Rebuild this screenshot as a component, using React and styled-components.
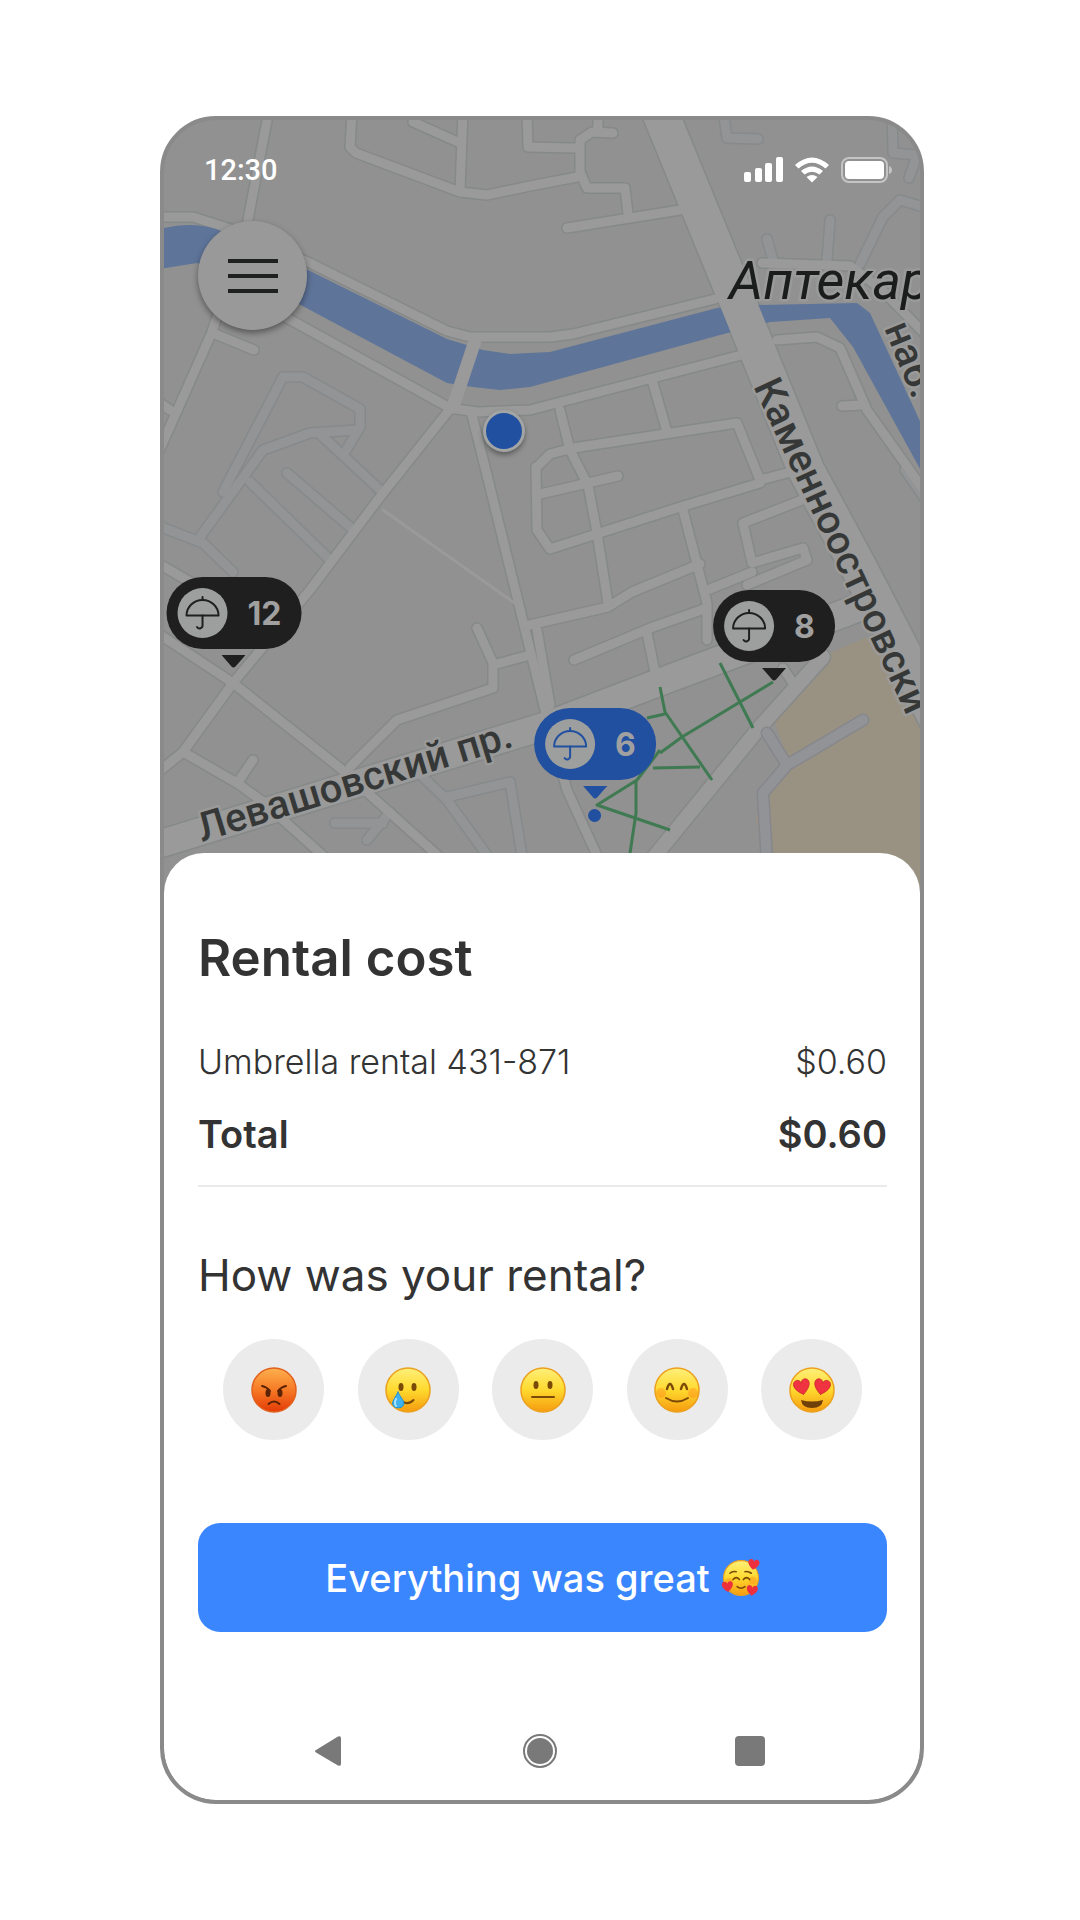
import React, { useState } from 'react'
import styled, { createGlobalStyle } from 'styled-components';

const minorRoads = [
  'M269 110 L247 225 L212 332 L156 458',
  'M215 334 L254 350',
  'M352 114 L350 147 L356 153 L460 192 L487 195 L530 186 L582 176',
  'M413 122 L460 143',
  'M463 110 L460 192',
  'M527 110 L528 147 L574 148',
  'M613 133 L592 132 L580 140 L580 172 L587 188 L625 188 L628 214',
  'M598 110 L598 131',
  'M567 228 L680 210',
  'M156 217 L193 217 L240 232 L310 263 L447 331 L470 337 L550 337 L573 334 L715 299',
  'M280 314 L450 408 L477 412 L530 410 L745 354',
  'M450 409 L380 497 L310 590 L233 683 L183 752 L156 774',
  'M472 415 L487 475 L517 597 L545 710 L567 790 L600 862',
  'M156 632 L233 683 L340 768 L445 862',
  'M156 562 L190 582 L230 610',
  'M183 752 L237 783 L262 801 L330 862',
  'M238 782 L253 760',
  'M350 767 L397 720 L493 688 L493 663 L477 628',
  'M493 665 L530 655',
  'M525 626 L608 607 L632 592 L700 564',
  'M156 400 L170 410',
  'M777 340 L817 337 L840 348 L867 410 L923 489',
  'M863 405 L842 406',
  'M762 263 L850 266 L880 288 L925 334',
  'M537 467 L550 454 L573 448 L737 423 L760 480 L787 473',
  'M560 410 L570 450 L588 485 L597 533 L608 603',
  'M653 383 L667 432',
  'M536 467 L537 530 L550 549 L677 508 L760 483',
  'M536 495 L618 476',
  'M683 510 L707 603 L707 640',
  'M802 500 L743 523 L752 563 L803 548',
  'M710 589 L752 572',
  'M747 585 L807 560 L803 548',
  'M574 660 L653 627 L704 609',
  'M647 633 L655 672',
  'M537 630 L550 705',
  'M783 668 L793 683',
];

const paleRoads = [
  'M223 492 L283 377 L303 377 L360 409 L360 427 L345 452',
  'M358 430 L310 433 L263 450 L200 537',
  'M320 434 L380 490',
  'M250 482 L327 557',
  'M287 473 L350 527',
  'M156 525 L203 543 L233 572',
  'M423 777 L447 800 L492 862',
  'M447 797 L510 782 L523 862',
  'M335 823 L383 823',
  'M390 812 L367 840',
  'M860 264 L883 217 L900 200 L920 206',
  'M827 260 L830 220',
  'M773 260 L767 239',
  'M723 110 L727 138 L758 139',
  'M892 110 L893 153 L917 155',
  'M917 155 L909 178',
  'M905 470 L926 500',
];

const footpaths = 'M720 663 L753 728 M773 682 L682 737 L660 753 M660 750 L637 780 L597 805 L670 830 M660 687 L665 712 L712 780 M665 714 L647 718 M653 768 L700 767 M636 780 L636 813 L629 860';

const CityMap = () => (
  <MapArt viewBox="164 120 756 773" preserveAspectRatio="xMidYMin slice" aria-hidden="true">
    <rect x="160" y="116" width="764" height="781" fill="#909190" />
    <path
      d="M867 637 L830 653 L800 695 L773 718 L787 757 L765 795 L756 818 L772 900 L924 900 L924 735 L880 650 Z"
      fill="#999283"
    />

    <g fill="none" strokeLinejoin="round" strokeLinecap="round">
      <g stroke="#868a8b" strokeWidth="12">
        {paleRoads.map((d) => <path key={d} d={d} />)}
      </g>
      <g stroke="#868989" strokeWidth="12">
        {minorRoads.map((d) => <path key={d} d={d} />)}
        <path d="M140 850 L545 726 L660 682 L850 611 L870 603" strokeWidth="30" />
        <path d="M823 657 L760 727 L650 862" strokeWidth="17" />
        <path d="M655 100 L737 300 L806 470 L860 570 L940 725" strokeWidth="39" />
      </g>
      <g stroke="#929496" strokeWidth="9">
        {paleRoads.map((d) => <path key={d} d={d} />)}
      </g>
      <g stroke="#999a99" strokeWidth="9">
        {minorRoads.map((d) => <path key={d} d={d} />)}
        <path d="M383 510 L520 607" strokeWidth="3" />
        <path d="M823 657 L760 727 L650 862" strokeWidth="14" />
        <path d="M140 850 L545 726 L660 682 L850 611 L870 603" strokeWidth="27" />
      </g>
    </g>

    <path
      d="M160 229 Q190 221 216 229 L310 271 L447 339 L467 345 L483 350 L510 354 L550 352 L717 308 L757 305 L857 303 L870 313 L924 430 L924 476 L853 347 L830 318 L770 322 L720 335 L530 387 L500 390 L473 387 L447 383 L297 303 L197 263 L160 269 Z"
      fill="#5e7499"
    />

    <g fill="none" strokeLinejoin="round" strokeLinecap="round">
      <path d="M475 341 L453 407" stroke="#999a99" strokeWidth="13" />
      <path d="M655 100 L737 300 L806 470 L860 570 L940 725" stroke="#999a99" strokeWidth="36" />
      <path d="M863 720 L787 765 L763 793 L767 862 M767 733 L787 765" stroke="#86878c" strokeWidth="13" />
      <path d="M863 720 L787 765 L763 793 L767 862 M767 733 L787 765" stroke="#929397" strokeWidth="10" />
      <path d={footpaths} stroke="#3f7a52" strokeWidth="3" strokeLinecap="butt" />
    </g>

    <StreetName x="729" y="299" $size={54} $italic>Аптекар</StreetName>
    <StreetName transform="translate(884 328) rotate(68)" $size={40}>наб.</StreetName>
    <StreetName transform="translate(753 386) rotate(65)" $size={40}>Каменноостровски</StreetName>
    <StreetName transform="translate(202 842) rotate(-17)" $size={40}>Левашовский пр.</StreetName>
  </MapArt>
);

const Umbrella = () => (
  <svg width="36" height="36" viewBox="0 0 36 36" fill="none" stroke="currentColor" strokeWidth="2" strokeLinecap="round">
    <path d="M2 20.500 A16 15.500 0 0 1 34 20.500 Z" strokeLinejoin="round" />
    <path d="M18 2 V5 M18 20.500 V30 A3 3 0 0 1 12.500 32" />
  </svg>
);

const Pin = ({ x, y, count, active }) => (
  <PinWrap $x={x} $y={y} $active={active}>
    <PinPill aria-label={`${count} umbrellas`}>
      <PinIcon><Umbrella /></PinIcon>
      {count}
    </PinPill>
    <svg width="24" height="13" viewBox="0 0 24 13" fill="currentColor">
      <path d="M0 0 H24 L14 11.500 Q12 13.500 10 11.500 Z" />
    </svg>
    {active && <PinTarget />}
  </PinWrap>
);

const StatusIcons = () => (
  <svg width="148" height="26" viewBox="0 0 148 26" fill="#fff" aria-hidden="true">
    <rect x="0" y="15" width="7" height="10" rx="2" />
    <rect x="11" y="11" width="7" height="14" rx="2" />
    <rect x="21" y="6" width="7" height="19" rx="2" />
    <rect x="32" y="0" width="7" height="25" rx="2" />
    <path d="M51 8 Q68 -7 85 8 L81.500 11.500 Q68 0 54.500 11.500 Z" />
    <path d="M57 14 Q68 5 79 14 L75.500 17.500 Q68 12 60.500 17.500 Z" />
    <path d="M62.500 20 Q68 16 73.500 20 L68 25.500 Z" />
    <rect x="98" y="1" width="45" height="24" rx="7" fill="none" stroke="#c4c4c4" strokeWidth="2" />
    <rect x="101" y="4" width="39" height="18" rx="4" />
    <path d="M145 9 Q148 10 148 13 Q148 16 145 17 Z" fill="#c4c4c4" />
  </svg>
);

const heart = 'M0 6 C-9 0 -7 -6 -3 -6 C-1 -6 0 -4 0 -3 C0 -4 1 -6 3 -6 C7 -6 9 0 0 6 Z';

const faces = {
  angry: (
    <>
      <path d="M12 20 Q17 21 20 25 M36 20 Q31 21 28 25" />
      <ellipse cx="18" cy="27" rx="2.500" ry="4" fill="#5b2405" stroke="none" />
      <ellipse cx="30" cy="27" rx="2.500" ry="4" fill="#5b2405" stroke="none" />
      <path d="M18.500 38 Q24 33 29.500 38" />
    </>
  ),
  tear: (
    <>
      <ellipse cx="17" cy="21" rx="2.500" ry="4" fill="#7a4a06" stroke="none" />
      <ellipse cx="30" cy="21" rx="2.500" ry="4" fill="#7a4a06" stroke="none" />
      <path d="M19 36 Q25 39 29.500 34" />
      <path d="M14 26 C16 31 20 34 20 38 A6 5.500 0 0 1 8.500 38 C8.500 34 12 31 14 26 Z" fill="#3eb1ee" stroke="#1c93d6" strokeWidth="1" />
      <path d="M12 33 Q10 37 12 40" stroke="#a8e4ff" />
    </>
  ),
  neutral: (
    <>
      <ellipse cx="17" cy="19" rx="2.500" ry="4" fill="#7a4a06" stroke="none" />
      <ellipse cx="31" cy="19" rx="2.500" ry="4" fill="#7a4a06" stroke="none" />
      <path d="M13 31 H35" />
    </>
  ),
  happy: (
    <>
      <ellipse cx="8" cy="27" rx="5" ry="5" fill="#ff7a1a" opacity="0.350" stroke="none" />
      <ellipse cx="40" cy="27" rx="5" ry="5" fill="#ff7a1a" opacity="0.350" stroke="none" />
      <path d="M14 23 Q17 13 20 23 M28 23 Q31 13 34 23" strokeWidth="2.500" />
      <path d="M13 32 Q24 39 35 32" />
    </>
  ),
  love: (
    <>
      <path d="M13 34 Q24 37 35 34 Q34 42 24 42 Q14 42 13 34 Z" fill="#70400a" stroke="none" />
      <path d={heart} transform="translate(14 21) rotate(-12) scale(1.250)" fill="#ef3340" stroke="#c41f2c" strokeWidth="0.500" />
      <path d={heart} transform="translate(34 21) rotate(12) scale(1.250)" fill="#ef3340" stroke="#c41f2c" strokeWidth="0.500" />
    </>
  ),
  adore: (
    <>
      <ellipse cx="9" cy="29" rx="5" ry="5" fill="#ff7a1a" opacity="0.350" stroke="none" />
      <ellipse cx="39" cy="27" rx="5" ry="5" fill="#ff7a1a" opacity="0.350" stroke="none" />
      <path d="M10 18 Q13 15 18 16 M29 16 Q33 15 37 18 M14 26 Q18 21 22 26 M27 26 Q31 21 35 26 M19 35 Q24 39 29 35" />
      <path d={heart} transform="translate(40 7) rotate(8) scale(1.100)" fill="#ee2f3c" stroke="none" />
      <path d={heart} transform="translate(7 35) rotate(-6) scale(1.100)" fill="#ee2f3c" stroke="none" />
      <path d={heart} transform="translate(38 40) rotate(8) scale(1.100)" fill="#ee2f3c" stroke="none" />
    </>
  ),
};

const Emoji = ({ name, size }) => {
  const angry = name === 'angry';
  return (
    <EmojiSvg width={size} height={size} viewBox="0 0 48 48" aria-hidden="true">
      <defs>
        <linearGradient id={`skin-${name}`} x1="0" y1="0" x2="0" y2="1">
          <stop offset="0" stopColor={angry ? '#fdb04e' : '#fff07a'} />
          <stop offset="0.500" stopColor={angry ? '#f67a26' : '#ffd92e'} />
          <stop offset="1" stopColor={angry ? '#e33a05' : '#f59b0f'} />
        </linearGradient>
      </defs>
      <circle cx="24" cy="24" r="22" fill={`url(#skin-${name})`} stroke={angry ? '#e2601d' : '#eba11d'} strokeWidth="1.500" />
      <g fill="none" stroke={angry ? '#5b2405' : '#7a4a06'} strokeWidth="2" strokeLinecap="round">
        {faces[name]}
      </g>
    </EmojiSvg>
  );
};

const ratings = [
  { name: 'angry', label: 'Terrible' },
  { name: 'tear', label: 'Bad' },
  { name: 'neutral', label: 'Okay' },
  { name: 'happy', label: 'Good' },
  { name: 'love', label: 'Great' },
];

const App = () => {
  const [rating, setRating] = useState(null);

  return (
    <Page>
      <GlobalStyle />
      <Phone>
        <MapArea>
          <CityMap />
          <StatusBar>
            <span>12:30</span>
            <StatusIcons />
          </StatusBar>
          <MenuButton type="button" aria-label="Menu">
            <svg width="50" height="34" viewBox="0 0 50 34" stroke="#1f2020" strokeWidth="4">
              <path d="M0 2 H50 M0 17 H50 M0 32 H50" />
            </svg>
          </MenuButton>
          <UserDot />
          <Pin x={70} y={457} count={12} />
          <Pin x={610} y={470} count={8} />
          <Pin x={431} y={588} count={6} active />
        </MapArea>

        <Sheet>
          <Title>Rental cost</Title>
          <CostRow>
            <span>Umbrella rental 431-871</span>
            <span>$0.60</span>
          </CostRow>
          <TotalRow>
            <span>Total</span>
            <span>$0.60</span>
          </TotalRow>
          <Question>How was your rental?</Question>
          <Ratings>
            {ratings.map(({ name, label }) => (
              <RatingButton
                key={name}
                type="button"
                aria-label={label}
                aria-pressed={rating === name}
                onClick={() => setRating(name)}
              >
                <Emoji name={name} size={48} />
              </RatingButton>
            ))}
          </Ratings>
          <SubmitButton type="button">
            Everything was great
            <Emoji name="adore" size={38} />
          </SubmitButton>
          <NavBar>
            <NavButton type="button" aria-label="Back">
              <svg width="34" height="34" viewBox="0 0 34 34" fill="#797979">
                <path d="M4 16 L26 2.500 Q29 1.500 29 4 V30 Q29 32.500 26 31.500 L4 18.500 Q2 17 4 16 Z" />
              </svg>
            </NavButton>
            <NavButton type="button" aria-label="Home">
              <svg width="34" height="34" viewBox="0 0 34 34">
                <circle cx="17" cy="17" r="16" fill="none" stroke="#797979" strokeWidth="2" />
                <circle cx="17" cy="17" r="13" fill="#797979" />
              </svg>
            </NavButton>
            <NavButton type="button" aria-label="Recent apps">
              <svg width="34" height="34" viewBox="0 0 34 34">
                <rect x="2" y="2" width="30" height="30" rx="4" fill="#797979" />
              </svg>
            </NavButton>
          </NavBar>
        </Sheet>
      </Phone>
    </Page>
  )
}

const GlobalStyle = createGlobalStyle`
  * {
    box-sizing: border-box;
  }

  body {
    margin: 0;
    background: #fff;
    color: #333;
    font-family: Inter, "Liberation Sans", sans-serif;
  }

  button {
    padding: 0;
    border: none;
    font-family: inherit;
    cursor: pointer;
  }
`;

const Page = styled.main`
  padding: 116px 156px 116px 160px;
`;

const Phone = styled.div`
  overflow: hidden;
  border: 4px solid #8a8a8a;
  border-radius: 56px;
  background: #8a8a8a;
`;

const MapArea = styled.section`
  position: relative;
  height: 773px;
  padding: 30px 28px 0 34px;
  overflow: hidden;
`;

const MapArt = styled.svg`
  position: absolute;
  top: 0;
  left: 0;
  width: 100%;
  height: 100%;
`;

const StreetName = styled.text`
  font-family: Roboto, sans-serif;
  font-size: ${({ $size }) => $size}px;
  font-style: ${({ $italic }) => ($italic ? 'italic' : 'normal')};
  font-weight: ${({ $italic }) => ($italic ? 400 : 500)};
  fill: ${({ $italic }) => ($italic ? '#1b1c1c' : '#363838')};
  stroke: #999a99;
  stroke-width: 5px;
  stroke-linejoin: round;
  paint-order: stroke;
`;

const StatusBar = styled.div`
  position: relative;
  display: flex;
  align-items: center;
  justify-content: space-between;
  height: 40px;
  padding-left: 6px;
  color: #fff;
  font-family: Roboto, sans-serif;
  font-size: 29px;
  font-weight: 500;
`;

const MenuButton = styled.button`
  position: relative;
  display: flex;
  align-items: center;
  justify-content: center;
  width: 109px;
  height: 109px;
  margin-top: 31px;
  border-radius: 50%;
  background: #999;
  box-shadow: 0 3px 6px rgba(0, 0, 0, 0.4);
`;

const UserDot = styled.div`
  position: absolute;
  top: 290px;
  left: 319px;
  width: 42px;
  height: 42px;
  border: 3px solid #a3a4a4;
  border-radius: 50%;
  background: #2150a0;
  box-shadow: 0 3px 5px rgba(0, 0, 0, 0.35);
`;

const PinWrap = styled.div`
  position: absolute;
  top: ${({ $y }) => $y}px;
  left: ${({ $x }) => $x}px;
  display: flex;
  flex-direction: column;
  align-items: center;
  gap: 6px;
  color: ${({ $active }) => ($active ? '#2150a0' : '#1f1f1f')};
  transform: translateX(-50%);
`;

const PinPill = styled.div`
  display: flex;
  align-items: center;
  gap: 20px;
  height: 72px;
  padding: 0 20px 0 11px;
  border-radius: 36px;
  background: currentColor;
  font-size: 32px;
  font-weight: 700;
  -webkit-text-fill-color: #a0a0a0;
`;

const PinIcon = styled.span`
  display: flex;
  align-items: center;
  justify-content: center;
  width: 50px;
  height: 50px;
  border-radius: 50%;
  background: #9d9e9e;
`;

const PinTarget = styled.span`
  width: 13px;
  height: 13px;
  margin-top: 4px;
  border-radius: 50%;
  background: currentColor;
`;

const EmojiSvg = styled.svg`
  display: block;
  overflow: visible;
`;

const Sheet = styled.section`
  position: relative;
  margin-top: -40px;
  padding: 75px 33px 32px 34px;
  border-radius: 40px 40px 52px 52px;
  background: #fff;
`;

const Title = styled.h1`
  margin: 0 0 54px;
  font-size: 51px;
  font-weight: 600;
  line-height: 60px;
`;

const CostRow = styled.div`
  display: flex;
  justify-content: space-between;
  font-size: 34px;
  font-weight: 300;
  line-height: 40px;
`;

const TotalRow = styled(CostRow)`
  margin-top: 28px;
  padding-bottom: 27px;
  border-bottom: 2px solid #ebebeb;
  font-size: 38px;
  font-weight: 600;
  line-height: 48px;
`;

const Question = styled.h2`
  margin: 63px 0 39px;
  font-size: 44px;
  font-weight: 400;
  line-height: 50px;
`;

const Ratings = styled.div`
  display: flex;
  justify-content: space-between;
  padding: 0 25px;
`;

const RatingButton = styled.button`
  display: flex;
  align-items: center;
  justify-content: center;
  width: 101px;
  height: 101px;
  border-radius: 50%;
  background: #ebebeb;
`;

const SubmitButton = styled.button`
  display: flex;
  align-items: center;
  justify-content: center;
  gap: 12px;
  width: 100%;
  height: 109px;
  margin-top: 83px;
  border-radius: 22px;
  background: #3a86ff;
  color: #fff;
  font-size: 38px;
  font-weight: 500;
`;

const NavBar = styled.nav`
  display: flex;
  justify-content: space-between;
  margin-top: 102px;
  padding: 0 120px 0 114px;
`;

const NavButton = styled.button`
  display: flex;
  background: none;
`;

export default App
